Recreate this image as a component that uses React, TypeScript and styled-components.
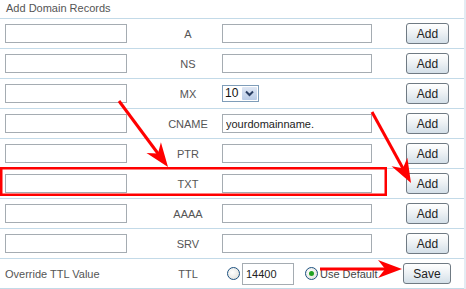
import React from 'react';
import styled, { createGlobalStyle } from 'styled-components';

const GlobalStyle = createGlobalStyle`
  body {
    margin: 0;
    background: #fff;
    font-family: "Liberation Sans", Arial, sans-serif;
  }
`;

const LINE = '#c3dae8';

const Panel = styled.div`
  position: relative;
  width: 464px;
  height: 289px;
  border-right: 2px solid #e3ecf3;
  overflow: hidden;
`;

const Title = styled.div`
  height: 18px;
  border-bottom: 1px solid ${LINE};
  padding-left: 6px;
  font-size: 11px;
  line-height: 16px;
  color: #555;
`;

const Row = styled.div`
  display: grid;
  grid-template-columns: 149px 68px 184px 43px;
  align-items: center;
  height: 29px;
  padding-left: 5px;
  border-bottom: 1px solid ${LINE};
`;

const Label = styled.div`
  font-size: 11px;
  color: #555;
  text-align: center;
`;

const Caption = styled.div`
  font-size: 11px;
  color: #555;
  white-space: nowrap;
`;

const TextBox = styled.input<{ $w: number; $h?: number }>`
  box-sizing: border-box;
  width: ${p => p.$w}px;
  height: ${p => p.$h ?? 19}px;
  border: 1px solid #a5acb2;
  padding: 0 3px;
  margin: 0;
  font-family: "Liberation Sans", Arial, sans-serif;
  font-size: 11px;
  color: #222;
  background: #fff;
  outline: none;
`;

const Button = styled.button<{ $w?: number; $shift?: number }>`
  box-sizing: border-box;
  width: ${p => p.$w ?? 43}px;
  height: 21px;
  margin-left: ${p => p.$shift ?? 0}px;
  padding: 0;
  border: 1px solid #6f7a83;
  border-radius: 3px;
  background: linear-gradient(#ffffff, #eef2f5 45%, #d3dfe8);
  font-family: "Liberation Sans", Arial, sans-serif;
  font-size: 12px;
  color: #222;
`;

const Select = styled.div`
  box-sizing: border-box;
  display: flex;
  align-items: stretch;
  width: 37px;
  height: 17px;
  border: 1px solid #7f9db9;
  background: #fff;
  font-size: 12px;
  color: #111;
`;

const SelectValue = styled.span`
  flex: 1;
  padding-left: 2px;
  line-height: 15px;
`;

const SelectArrow = styled.span`
  width: 15px;
  margin: 1px;
  display: flex;
  align-items: center;
  justify-content: center;
  background: linear-gradient(#dfe7f4, #b9cbe6);
  border-radius: 1px;
`;

const TtlCell = styled.div`
  display: flex;
  align-items: center;
  padding-left: 5px;
`;

const Radio = styled.span<{ $on?: boolean; $gap?: number }>`
  box-sizing: border-box;
  width: 13px;
  height: 13px;
  margin-left: ${p => p.$gap ?? 0}px;
  margin-right: 2px;
  border-radius: 50%;
  border: 1px solid #1c5180;
  background: radial-gradient(circle at 40% 40%, #fff, #dcdcd6);
  display: flex;
  align-items: center;
  justify-content: center;

  &::after {
    content: '';
    display: ${p => (p.$on ? 'block' : 'none')};
    width: 5px;
    height: 5px;
    border-radius: 50%;
    background: #21a121;
  }
`;

const RadioText = styled.span`
  font-size: 11px;
  color: #444;
  white-space: nowrap;
`;

const Overlay = styled.svg`
  position: absolute;
  left: 0;
  top: 0;
  pointer-events: none;
`;

const records = ['A', 'NS', 'MX', 'CNAME', 'PTR', 'TXT', 'AAAA', 'SRV'];

function arrowHead(x1: number, y1: number, x2: number, y2: number, len: number, half: number) {
  const dx = x2 - x1;
  const dy = y2 - y1;
  const d = Math.hypot(dx, dy);
  const ux = dx / d;
  const uy = dy / d;
  const nx = -uy;
  const ny = ux;
  const bx = x2 - ux * len;
  const by = y2 - uy * len;
  const mx = x2 - ux * len * 0.7;
  const my = y2 - uy * len * 0.7;
  return `${x2},${y2} ${bx + nx * half},${by + ny * half} ${mx},${my} ${bx - nx * half},${by - ny * half}`;
}

const Arrow = ({ x1, y1, x2, y2 }: { x1: number; y1: number; x2: number; y2: number }) => {
  const d = Math.hypot(x2 - x1, y2 - y1);
  const ex = x2 - ((x2 - x1) / d) * 14;
  const ey = y2 - ((y2 - y1) / d) * 14;
  return (
    <>
      <line x1={x1} y1={y1} x2={ex} y2={ey} stroke="#f00" strokeWidth={3} />
      <polygon points={arrowHead(x1, y1, x2, y2, 24, 9)} fill="#f00" />
    </>
  );
};

export default function App() {
  return (
    <Panel>
      <GlobalStyle />
      <Title>Add Domain Records</Title>
      {records.map(r => (
        <Row key={r}>
          <TextBox $w={122} />
          <Label>{r}</Label>
          <div>
            {r === 'MX' ? (
              <Select>
                <SelectValue>10</SelectValue>
                <SelectArrow>
                  <svg width="9" height="7" viewBox="0 0 9 7">
                    <path d="M1 1.5 L4.5 5 L8 1.5" fill="none" stroke="#2b3f63" strokeWidth="2" />
                  </svg>
                </SelectArrow>
              </Select>
            ) : (
              <TextBox $w={150} defaultValue={r === 'CNAME' ? 'yourdomainname.' : ''} />
            )}
          </div>
          <Button>Add</Button>
        </Row>
      ))}
      <Row>
        <Caption>Override TTL Value</Caption>
        <Label>TTL</Label>
        <TtlCell>
          <Radio />
          <TextBox $w={52} $h={22} defaultValue="14400" />
          <Radio $on $gap={11} />
          <RadioText>Use Default</RadioText>
        </TtlCell>
        <Button $w={48} $shift={-3}>Save</Button>
      </Row>
      <Overlay width={466} height={289}>
        <rect x={1.25} y={168.25} width={384.5} height={26.5} fill="none" stroke="#f00" strokeWidth={2.5} />
        <Arrow x1={119} y1={101} x2={168} y2={167} />
        <Arrow x1={372} y1={112} x2={411} y2={183} />
        <Arrow x1={320} y1={269} x2={402} y2={269} />
      </Overlay>
    </Panel>
  );
}
